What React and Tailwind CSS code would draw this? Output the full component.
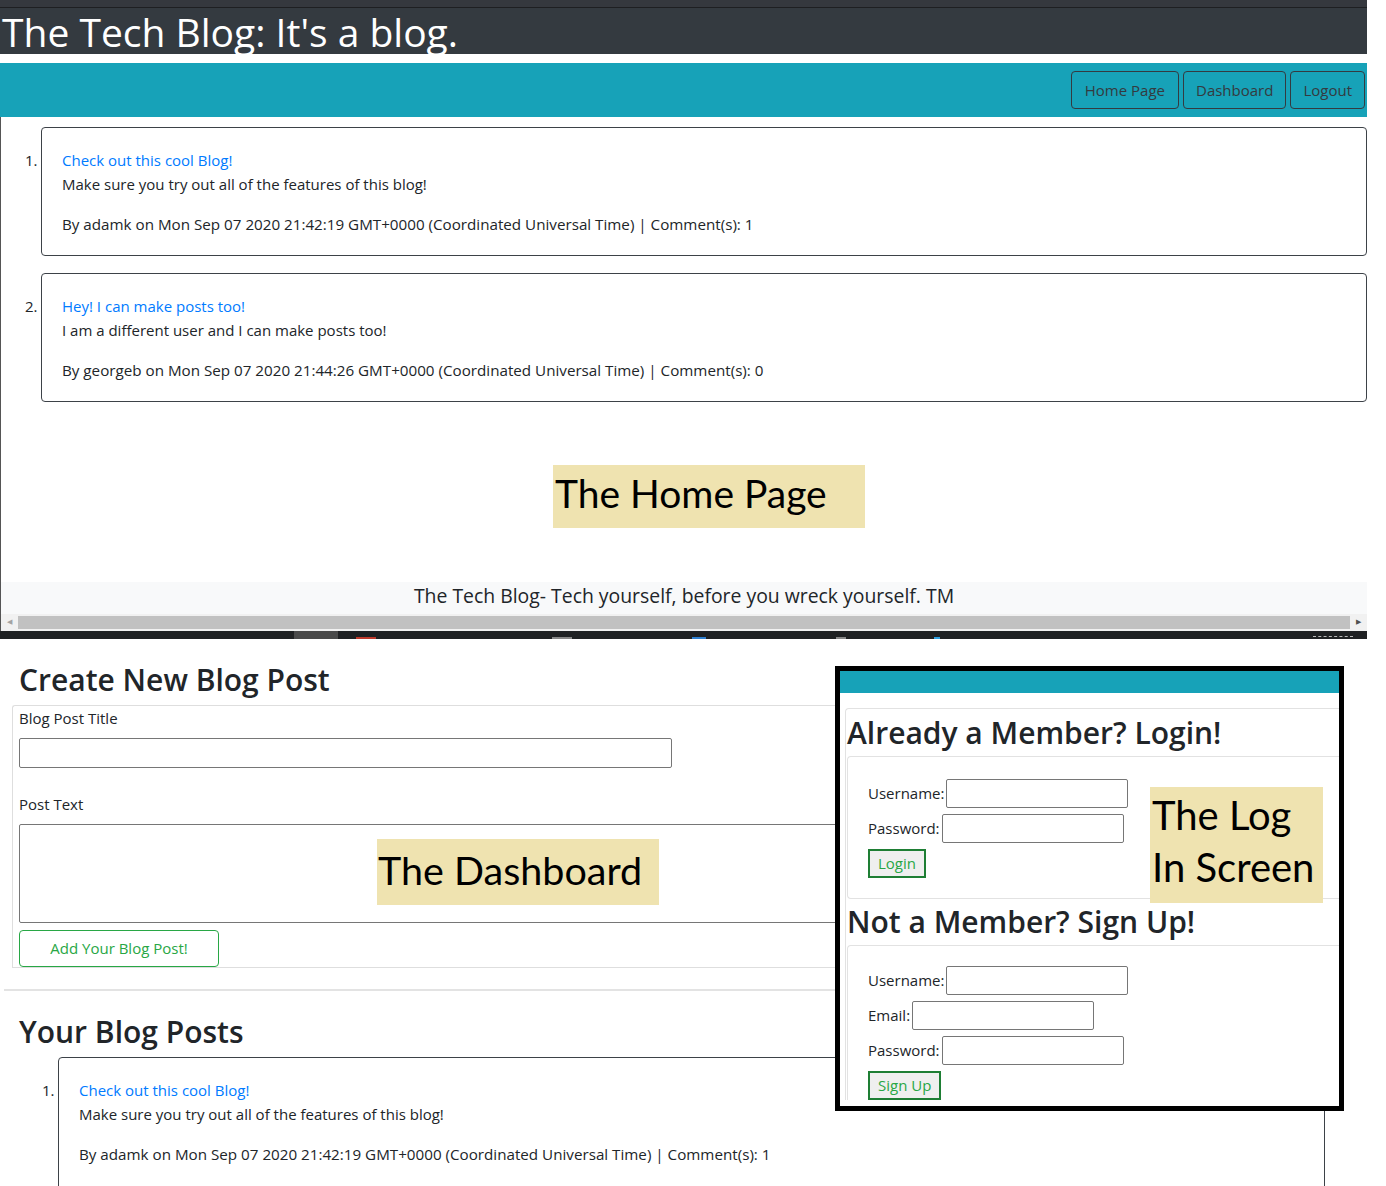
import React from "react";

const UI = { fontFamily: '"Open Sans", "Noto Sans", sans-serif' };
const LBL = { fontFamily: 'Lato, "Open Sans", sans-serif' };

function PostCard({ n, title, body, meta, cls }) {
  return (
    <div className={"relative border border-[#3d4248] rounded-[4px] px-[20px] pt-[20px] pb-[19px] " + cls}>
      <span className="absolute left-[-17px] top-[20px] text-[15px] leading-[24px] text-[#212529]">{n}.</span>
      <div className="text-[15px] leading-[24px] text-[#007bff]">{title}</div>
      <div className="text-[15px] leading-[24px] text-[#212529]">{body}</div>
      <div className="mt-[16px] text-[15.2px] leading-[24px] text-[#212529]">{meta}</div>
    </div>
  );
}

function Field({ label, w }) {
  return (
    <div className="flex items-center h-[29px] mb-[6px]">
      <span className="text-[15px] text-[#212529] mr-[2px]">{label}</span>
      <div className={"h-[29px] border border-[#767676] rounded-[2px] bg-white " + w}></div>
    </div>
  );
}

export default function App() {
  return (
    <div className="relative w-[1386px] h-[1186px] bg-white overflow-hidden" style={UI}>
      {/* Home page screenshot */}
      <div className="w-[1367px] flex flex-col">
        <div className="h-[8px] bg-[#35383e] border-b border-[#1e1f22]"></div>
        <div className="h-[46px] bg-[#343a40] flex items-end">
          <h1 className="text-[39px] leading-[46px] text-white pl-[2px] translate-y-[1px]">The Tech Blog: It's a blog.</h1>
        </div>
        <div className="h-[9px] bg-white"></div>
        <nav className="h-[54px] bg-[#17a2b8] flex items-center justify-end gap-[4px] pr-[2px]">
          <button className="h-[38px] px-[13px] border border-[#343a40] rounded-[4px] text-[15px] text-[#343a40]">Home Page</button>
          <button className="h-[38px] px-[12px] border border-[#343a40] rounded-[4px] text-[15px] text-[#343a40]">Dashboard</button>
          <button className="h-[38px] px-[12px] border border-[#343a40] rounded-[4px] text-[15px] text-[#343a40]">Logout</button>
        </nav>
        <div className="border-l border-[#555] flex flex-col">
          <div className="pt-[10px] pl-[40px] flex flex-col gap-[17px]">
            <PostCard
              n="1"
              title="Check out this cool Blog!"
              body="Make sure you try out all of the features of this blog!"
              meta="By adamk on Mon Sep 07 2020 21:42:19 GMT+0000 (Coordinated Universal Time) | Comment(s): 1"
              cls=""
            />
            <PostCard
              n="2"
              title="Hey! I can make posts too!"
              body="I am a different user and I can make posts too!"
              meta="By georgeb on Mon Sep 07 2020 21:44:26 GMT+0000 (Coordinated Universal Time) | Comment(s): 0"
              cls=""
            />
          </div>
          <div className="mt-[63px] ml-[552px] w-[312px] h-[63px] bg-[#efe3b0] flex items-center">
            <span className="text-[39px] leading-none text-black pl-[2px] -translate-y-[3px]" style={LBL}>The Home Page</span>
          </div>
          <div className="mt-[54px] h-[32px] bg-[#f8f9fa] flex items-center justify-center">
            <span className="text-[19.4px] leading-[28px] text-[#212529] -translate-y-[2px]">The Tech Blog- Tech yourself, before you wreck yourself. TM</span>
          </div>
        </div>
        <div className="h-[17px] bg-[#f1f1f1] flex items-center border-l border-[#555]">
          <span className="w-[17px] flex justify-center text-[#a3a3a3] text-[7px]">◀</span>
          <div className="h-[13px] flex-1 bg-[#c1c1c1]"></div>
          <span className="w-[17px] flex justify-center text-[#505050] text-[7px]">▶</span>
        </div>
        <div className="h-[8px] bg-[#1f2123] flex items-end">
          <div className="ml-[294px] w-[44px] h-[8px] bg-[#4a4a4a]"></div>
          <div className="ml-[18px] w-[20px] h-[2px] bg-[#c0392b]"></div>
          <div className="ml-[176px] w-[20px] h-[2px] bg-[#888]"></div>
          <div className="ml-[120px] w-[14px] h-[2px] bg-[#2f7fd0]"></div>
          <div className="ml-[130px] w-[10px] h-[2px] bg-[#888]"></div>
          <div className="ml-[88px] w-[6px] h-[2px] bg-[#2fa0e0]"></div>
          <div className="ml-auto mr-[14px] w-[40px] h-[3px] border-t border-dashed border-[#bbb]"></div>
        </div>
      </div>

      {/* Dashboard screenshot */}
      <div className="w-[1330px] flex flex-col pt-[22px] text-[#212529]">
        <h2 className="pl-[19px] text-[30px] leading-[38px] font-semibold">Create New Blog Post</h2>
        <div className="mt-[6px] ml-[12px] border-t border-l border-b border-[#dedede] rounded-tl-[3px] pl-[6px] flex flex-col">
          <div className="text-[15px] leading-[24px]">Blog Post Title</div>
          <div className="mt-[8px] w-[653px] h-[30px] border border-[#767676] rounded-[2px]"></div>
          <div className="mt-[24px] text-[15px] leading-[24px]">Post Text</div>
          <div className="mt-[8px] h-[99px] border border-[#767676] rounded-[2px] relative">
            <div className="absolute left-[357px] top-[14px] w-[282px] h-[66px] bg-[#efe3b0] flex items-center">
              <span className="text-[39.5px] leading-none text-black pl-[1px] -translate-y-[2px]" style={LBL}>The Dashboard</span>
            </div>
          </div>
          <button className="mt-[7px] w-[200px] h-[37px] border border-[#28a745] rounded-[4px] text-[15px] text-[#28a745]">Add Your Blog Post!</button>
        </div>
        <div className="mt-[21px] ml-[4px] h-[2px] bg-[#e3e3e3]"></div>
        <h2 className="mt-[22px] pl-[19px] text-[30px] leading-[38px] font-semibold">Your Blog Posts</h2>
        <div className="mt-[6px] pl-[58px] w-[1325px]">
          <PostCard
            n="1"
            title="Check out this cool Blog!"
            body="Make sure you try out all of the features of this blog!"
            meta="By adamk on Mon Sep 07 2020 21:42:19 GMT+0000 (Coordinated Universal Time) | Comment(s): 1"
            cls="h-[140px]"
          />
        </div>
      </div>

      {/* Login screenshot overlay */}
      <div className="absolute left-[835px] top-[666px] w-[509px] h-[445px] border-[5px] border-black bg-white flex flex-col text-[#212529]">
        <div className="h-[22px] bg-[#17a2b8] shrink-0"></div>
        <div className="mt-[15px] ml-[5px] border-t border-l border-[#e2e2e2] rounded-tl-[4px] flex flex-col">
          <h3 className="pl-[1px] text-[30px] leading-[47px] font-semibold">Already a Member? Login!</h3>
          <div className="border-t border-l border-b border-[#e2e2e2] rounded-l-[4px] ml-[1px] pl-[20px] pt-[22px] pb-[20px] flex flex-col">
            <Field label="Username:" w="w-[182px]" />
            <Field label="Password:" w="w-[182px]" />
            <button className="self-start h-[29px] px-[8px] border-2 border-[#1e7e34] bg-[#efefef] text-[15px] text-[#28a745]">Login</button>
          </div>
          <h3 className="pl-[1px] text-[30px] leading-[46px] font-semibold">Not a Member? Sign Up!</h3>
          <div className="border-t border-l border-[#e2e2e2] rounded-tl-[4px] ml-[1px] pl-[20px] pt-[20px] flex flex-col">
            <Field label="Username:" w="w-[182px]" />
            <Field label="Email:" w="w-[182px]" />
            <Field label="Password:" w="w-[182px]" />
            <button className="self-start h-[29px] px-[8px] border-2 border-[#1e7e34] bg-[#efefef] text-[15px] text-[#28a745]">Sign Up</button>
          </div>
        </div>
        <div className="absolute left-[310px] top-[116px] w-[173px] h-[116px] bg-[#efe3b0] pl-[2px] pt-[2px]">
          <div className="text-[40px] leading-[52px] text-black" style={LBL}>The Log In Screen</div>
        </div>
      </div>
    </div>
  );
}
